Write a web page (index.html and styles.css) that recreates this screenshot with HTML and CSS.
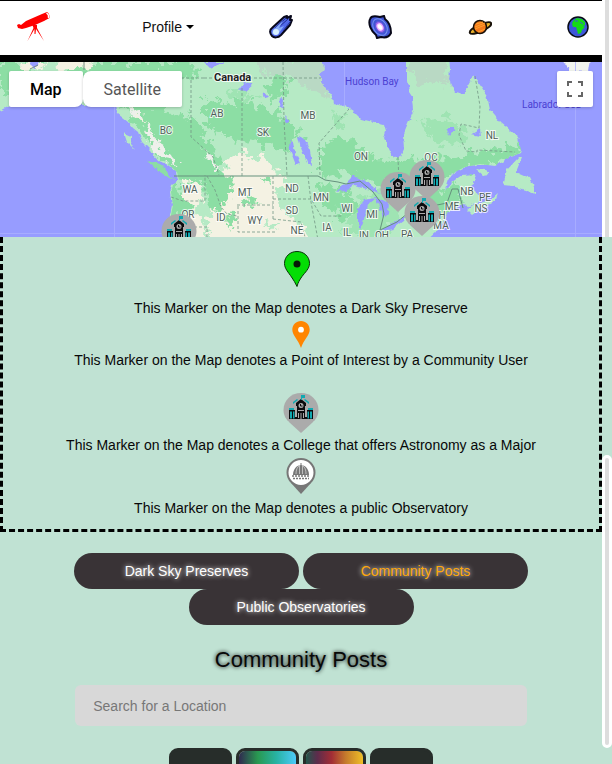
FILE: index.html
```html
<!DOCTYPE html>
<html lang="en">
<head>
<meta charset="utf-8">
<meta name="viewport" content="width=device-width, initial-scale=1">
<title>Community Posts</title>
<link rel="stylesheet" href="styles.css">
</head>
<body>
<svg class="defs" aria-hidden="true">
  <symbol id="college-pin" viewBox="0 0 36 40">
    <path fill="#ababab" d="M18 0C8 0 .5 7.500.5 17c0 6 3 9.500 6 12.500L18 40l11.500-10.500c3-3 6-6.500 6-12.500C35.500 7.500 28 0 18 0z"/>
    <path fill="#0b0b0d" d="M18 6l-5 4v3h1v11h-2v2h12v-2h-2V13h1v-3zM6 17h6v9H6zM24 17h6v9h-6z"/>
    <path fill="#12a9b0" d="M18 2h4v3h-3v2h-1zM7 18.500h2v7H7zm3 0h1.500v7H10zm14.500 0h1.500v7h-1.500zm2.500 0h2v7h-2zM10 9l4-3 1 1-5 4zM26 9l-4-3-1 1 5 4zM6 15h5v2H6zM25 15h5v2h-5z"/>
    <circle cx="18" cy="12.500" r="2.500" fill="#ababab"/>
    <path d="M17.500 11V13h2" fill="none" stroke="#0b0b0d"/>
    <path fill="#ababab" d="M15 17h6v1h-6zM15 20h1v5h-1zm5 0h1v5h-1zM17.500 20h1v6h-1z"/>
  </symbol>
</svg>
<div class="shell">
  <div class="page">
    <header class="navbar">
      <a class="logo" href="#" aria-label="Home">
        <svg width="34" height="30" viewBox="0 0 34 30"><g fill="#f00"><path d="M0 13l2-1 2 1 5-4L25 2l5-2c2 1 3 4 2.500 6L27 9l-9 4-9 3-4 1-4-1z"/><path d="M15 12l5 1v3l7 13-8-12-.5 5h-1V17l-7 12 6-13z"/></g><path d="M29.500 1c1.500 1 2.500 3 2 5" stroke="#fff" fill="none" stroke-width="1.500"/></svg>
      </a>
      <button class="profile" type="button">Profile<span class="caret"></span></button>
      <a href="#" aria-label="Comets">
        <svg width="24" height="24" viewBox="0 0 24 24"><path d="M3 13L15 2l3-1v2l4-2-1 4h2l-2 5-9 10c-3 3-7 3-9 1s-3-6 0-8z" fill="#5068e8" stroke="#08081c" stroke-width="2" stroke-linejoin="round"/><path d="M6 13L17 3M14 16l7-9M10 12l9-8" stroke="#202c90"/><path d="M4 15l10-9-4 7 5-2-5 7c-3 3-6 2-7 0z" fill="#89adfa"/><circle cx="7" cy="17" r="3" fill="#d8efff"/></svg>
      </a>
      <a href="#" aria-label="Galaxies">
        <svg width="24" height="24" viewBox="0 0 24 24"><path d="M2 4c1-3 6-3 10-2l4-1 1 3c4 3 6 9 6 14-2 4-6 5-10 4l-4 1-1-3C3 16 0 9 2 4z" fill="#4054d5" stroke="#070718" stroke-width="2"/><g fill="none" transform="rotate(57 12 12)"><ellipse cx="12" cy="12" rx="9" ry="6.500" stroke="#7896f0"/><ellipse cx="12" cy="12" rx="6" ry="4" fill="#a56af0" stroke="#6058d5"/><ellipse cx="12" cy="12" rx="3.500" ry="2.500" fill="#fff" stroke="#f3b7ff"/></g></svg>
      </a>
      <a href="#" aria-label="Planets">
        <svg width="24" height="24" viewBox="0 0 24 24"><path d="M2 18c-1-2 2-5 9-8s11-4 12-2-2 5-9 8-11 4-12 2z" fill="#e9b02b" stroke="#171008" stroke-width="2"/><circle cx="12" cy="12" r="6.500" fill="#f47a1b" stroke="#171008" stroke-width="1.500"/><path d="M8 9l7-2M7 12l10-4M7 14l10-4M10 17l7-3" stroke="#ffa02e"/></svg>
      </a>
      <a href="#" aria-label="Earth">
        <svg width="22" height="22" viewBox="0 0 22 22"><circle cx="11" cy="11" r="10" fill="#3d57d9" stroke="#080b14" stroke-width="1.500"/><path d="M6 5l4-3 5 1 3 3v3l-2 1 2 1-3 3-1 3-3 1-1-4-1-3H6L5 8z" fill="#15db16"/><path d="M8 5h3M13 6l3 2" stroke="#3d57d9"/></svg>
      </a>
    </header>

    <section class="map" aria-label="Map">
      <svg class="map-canvas" viewBox="0 62 602 175" preserveAspectRatio="xMidYMin slice">
        <defs>
          <filter id="coast" x="-5%" y="-5%" width="110%" height="110%" color-interpolation-filters="sRGB"><feTurbulence type="fractalNoise" baseFrequency=".18" numOctaves="2" seed="4"/><feDisplacementMap in="SourceGraphic" scale="5" xChannelSelector="R" yChannelSelector="G"/></filter>
          <filter id="patch" x="-10%" y="-10%" width="120%" height="120%" color-interpolation-filters="sRGB"><feTurbulence type="fractalNoise" baseFrequency=".12" numOctaves="4" seed="8"/><feDisplacementMap in="SourceGraphic" scale="26" xChannelSelector="R" yChannelSelector="G"/></filter>
          <filter id="plain" x="-10%" y="-10%" width="120%" height="120%" color-interpolation-filters="sRGB"><feTurbulence type="fractalNoise" baseFrequency=".14" numOctaves="3" seed="3"/><feDisplacementMap in="SourceGraphic" scale="16" xChannelSelector="R" yChannelSelector="G"/></filter>
          <clipPath id="land-clip"><path d="M-10 50H448L450 68 449 80 455 92 463 94 470 82 473 75 480 85 487 95 490 110 500 122 510 130 518 137 521 150 520 153 505 160 495 166 480 164 465 167 455 172 448 180 444 192 452 182 462 175 475 174 477 180 470 186 476 192 482 200 470 206 460 205 448 212 443 222 437 230 424 242H170L171 215 173 205 171 192 173 185 179 180 177 172 169 165 158 160 151 150 143 142 139 132 134 128 129 122 119 114 116 105H12L0 110-10 111z"/></clipPath>
        </defs>
        <rect y="62" width="602" height="175" fill="#979cff"/>
        <g fill="#b6eac5" filter="url(#coast)">
          <path d="M-10 50H448L450 68 449 80 455 92 463 94 470 82 473 75 480 85 487 95 490 110 500 122 510 130 518 137 521 150 520 153 505 160 495 166 480 164 465 167 455 172 448 180 444 192 452 182 462 175 475 174 477 180 470 186 476 192 482 200 470 206 460 205 448 212 443 222 437 230 424 242H169L170 215 172 205 170 192 172 185 178 180 176 172 168 165 157 160 150 150 142 142 138 132 133 128 128 122 118 114 115 105H12L0 111-10 112z"/>
          <path d="M467 210L473 205 490 200 498 193 495 201 482 208 472 215zM503 185L507 170 519 157 522 157 516 172 530 178 535 188 535 194 525 190 512 186zM476 169L485 170 490 174 483 175zM124 133L131 136 131 143 135 150 127 142z"/>
          <path d="M148 161L160 164 168 172 174 181 160 172z" fill="#8cdea4"/>
          <path d="M562 58H590L588 72 570 71z" fill="#f2f5ef"/>
        </g>
        <g clip-path="url(#land-clip)">
          <g filter="url(#patch)">
            <path fill="#8cdea4" d="M124 108L140 88 170 112 195 118 212 146 222 168 218 186 190 184 174 176 150 146zM205 100L250 103 288 120 304 138 282 150 252 142 226 136 205 126zM320 145L345 135 362 150 377 160 403 162 430 158 455 157 515 143 522 156 475 168 450 176 426 175 403 190 370 183 345 172 320 180zM0 62H45L30 80 0 96zM60 62H190L200 72 180 80 66 76z"/>
            <path fill="#8cdea4" d="M318 184L350 190 360 212 342 221 323 203zM430 195L455 184 466 190 449 216 432 221zM270 70L290 80 280 100 268 98zM166 184H180L184 244H164z"/>
            <path fill="#b9d9c4" d="M260 58H322L330 98 310 90 290 78 262 74zM408 58H448V74L455 82 430 84 412 80z"/>
            <path fill="#9fe4b3" d="M330 110L350 120 340 130zM228 92L240 88 256 98 240 102zM420 120L450 116 470 140 440 146zM360 200L380 190 400 204 390 236H340L352 220z"/>
          </g>
          <g filter="url(#plain)">
            <path fill="#f4f2e3" d="M226 163L232 158 241 148 252 160 262 155 274 169 286 178 290 196 278 210 292 219 308 230 306 248H206L208 222 214 204 206 196 220 186zM186 182L200 180 203 196 192 208 204 222 206 245H184L188 220 182 200z"/>
            <path fill="#f4f2e3" d="M133 105L142 114 144 123 135 116zM20 62H45L42 69 24 70zM56 60H94L91 68 61 70z"/>
            <path fill="#8cdea4" d="M208 160L219 172 232 178 231 192 224 204 216 212 207 204 206 184zM236 201L254 199 262 203 250 206zM228 212L236 214 234 228 227 226zM258 178L274 182 266 186zM184 203L194 206 196 212 184 212zM176 196L184 196V240H178z"/>
            <path fill="#b6eac5" d="M276 190L296 180 316 194 320 220 310 228 290 214 280 212zM262 222L280 226 270 231z"/>
            <path fill="#eef0eb" d="M146 124L151 127 156 141 166 147 174 157 178 168 170 162 160 156 154 148 148 137zM202 147L210 156 217 170 213 170zM128 106L142 110 142 118 134 114z"/>
          </g>
        </g>
        <g fill="#979cff" filter="url(#coast)">
          <path d="M321 55L324 68 321 75 321 82 326 88 332 96 333 104 345 106 353 111 361 119 373 122 384 125 386 132 384 138 390 151 394 158 400 157 404 148 403 136 408 124 414 110 413 98 409 92 407 82 407 55z"/>
          <path d="M336 193L345 184 353 176 365 180 372 186 380 193 367 189 354 186 345 191zM358 225L358 208 364 200 376 198 367 206 363 222 360 230zM375 198L389 202 388 213 383 218 378 204zM380 231L393 223 406 217 404 221 393 229zM298 136L305 140 310 150 312 166 307 163 301 148zM289 141L293 142 295 153 300 163 296 165 290 150zM280 98L284 100 282 110 279 107zM238 90L244 82 254 84 246 91zM204 62H225L210 68zM30 62H39L34 69zM470 135L480 129 481 137zM446 128L455 128 450 136zM284 115L290 121 286 124zM262 90L268 97 264 98z"/>
        </g>
        <g fill="none" stroke="#739784" stroke-width="1">
          <path d="M174 176H318L325 180 338 182 346 184 360 181 373 192 382 204 384 214 380 230 397 222 408 213 431 210 437 205 447 203 452 189 458 189 463 208" stroke="#65917d"/>
          <g stroke-dasharray="3 2" opacity=".8"><path d="M176 78H204M191 80V137L200 145 213 157 219 175M204 78H321M283 62L284 120 287 175M242 88V176M320 175L319 143 349 109M398 157L399 184M273 176V220M273 199H311L321 216H342M308 176L311 202 318 240M171 197L183 201H205V175M184 227H207V237M273 219L301 222 305 237M237 205H273M238 206V232H275M207 176L215 190 221 207 227 214 237 216M475 76L480 106 479 128 461 124 459 135 466 151 477 152V150L515 152"/></g>
        </g>
        <g stroke="#acb1ff" stroke-width="1" opacity=".8"><path d="M114.500 107V237M344.500 62V107M575.500 62V237M0 233.500H167M440 233.500H602"/></g>
        <path d="M30 69L38 65M84 62V70" stroke="#758b80"/>
        <g class="map-labels">
          <text x="166" y="134">BC</text><text x="217" y="117">AB</text><text x="263" y="136">SK</text><text x="308" y="119">MB</text><text x="361" y="160">ON</text><text x="431" y="161">QC</text><text x="492" y="139">NL</text><text x="190" y="193">WA</text><text x="188" y="218">OR</text><text x="245" y="196">MT</text><text x="292" y="192">ND</text><text x="292" y="214">SD</text><text x="321" y="201">MN</text><text x="347" y="212">WI</text><text x="372" y="218">MI</text><text x="221" y="221">ID</text><text x="255" y="224">WY</text><text x="297" y="234">NE</text><text x="327" y="231">IA</text><text x="347" y="236">IL</text><text x="364" y="239">IN</text><text x="382" y="239">OH</text><text x="407" y="238">PA</text><text x="467" y="195">NB</text><text x="485" y="201">PE</text><text x="481" y="212">NS</text><text x="452" y="210">ME</text><text x="442" y="219">H</text><text x="441" y="229">MA</text>
          <text class="country" x="214" y="81">Canada</text>
        </g>
        <g class="sea"><text x="345" y="85">Hudson Bay</text><text x="522" y="108">Labrador Sea</text></g>
        <use href="#college-pin" x="380" y="172" width="36" height="40"/>
        <use href="#college-pin" x="409" y="160" width="36" height="40"/>
        <use href="#college-pin" x="404" y="196" width="36" height="40"/>
        <use href="#college-pin" x="161" y="214" width="36" height="40"/>
      </svg>
      <div class="map-controls">
        <div class="map-types"><button class="map-type current" type="button">Map</button><button class="map-type" type="button">Satellite</button></div>
        <button class="fullscreen" type="button" aria-label="Toggle fullscreen view"><svg width="18" height="18" viewBox="0 0 18 18"><path d="M2 6V2h4M12 2h4v4M16 12v4h-4M6 16H2v-4" fill="none" stroke="#666" stroke-width="2"/></svg></button>
      </div>
    </section>

    <section class="legend">
      <figure class="entry">
        <svg width="34" height="36" viewBox="0 0 34 36"><path d="M13 .500C6 .500.500 5.500.500 12.500c0 5 4 9 7 13.500 2 3 4 6 5.500 9.500 1-4 2.500-6.500 5-10 3-4 7.500-8 7.500-13C25.500 5.500 20 .500 13 .500z" fill="#04dd05" stroke="#093409"/><circle cx="13" cy="13" r="3.500" fill="#061806"/></svg>
        <figcaption>This Marker on the Map denotes a Dark Sky Preserve</figcaption>
      </figure>
      <figure class="entry">
        <svg width="18" height="27" viewBox="0 0 18 28"><path d="M9 0C4 0 0 4 0 9c0 6 6 10 9 19 3-9 9-13 9-19 0-5-4-9-9-9z" fill="#ff8500"/><circle cx="9" cy="9" r="3" fill="#fff"/></svg>
        <figcaption>This Marker on the Map denotes a Point of Interest by a Community User</figcaption>
      </figure>
      <figure class="entry spaced">
        <svg width="36" height="40"><use href="#college-pin" width="36" height="40"/></svg>
        <figcaption>This Marker on the Map denotes a College that offers Astronomy as a Major</figcaption>
      </figure>
      <figure class="entry">
        <svg width="30" height="36" viewBox="0 0 30 36"><path d="M5 25h20L15 36z" fill="#777"/><circle cx="15" cy="14.500" r="13.500" fill="#fff" stroke="#777" stroke-width="2"/><path d="M7 17c0-6 4-10 8-10s8 4 8 10z" fill="#777"/><path d="M10 16c0-4 1-7 4-9M13.500 16V8M16.500 16V8M20 16c0-4-1-7-4-9" fill="none" stroke="#ddd" stroke-width=".7"/><path d="M6 18h18M7 20.500h16" stroke="#777" stroke-width="1.500" stroke-dasharray="2 1"/><path d="M15 5v2" stroke="#777"/></svg>
        <figcaption>This Marker on the Map denotes a public Observatory</figcaption>
      </figure>
    </section>

    <main class="content">
      <nav class="tabs" aria-label="Lists">
        <button class="tab" type="button">Dark Sky Preserves</button>
        <button class="tab active" type="button">Community Posts</button>
        <button class="tab" type="button">Public Observatories</button>
      </nav>
      <h1>Community Posts</h1>
      <input class="search" type="search" placeholder="Search for a Location" aria-label="Search for a Location">
      <div class="swatches">
        <button class="swatch" type="button" aria-label="Dark"></button>
        <button class="swatch cool" type="button" aria-label="Cool"></button>
        <button class="swatch warm" type="button" aria-label="Warm"></button>
        <button class="swatch" type="button" aria-label="Plain"></button>
      </div>
    </main>
  </div>
  <div class="rail" aria-hidden="true"><div class="rail-top"></div><div class="rail-thumb"></div></div>
</div>
</body>
</html>
```
FILE: styles.css
```css
* { box-sizing: border-box; }
html { scrollbar-width: none; }
body { margin: 0; background: #c0e2d3; color: #080808; font: 14px/22px "Liberation Sans", Arial, sans-serif; }
button, input { font: inherit; }
svg { display: block; }
.defs { position: absolute; width: 0; height: 0; }
.shell { display: grid; grid-template-columns: minmax(0, 1fr) 10px; max-height: 100vh; overflow: hidden; }

.navbar { display: flex; align-items: center; justify-content: space-between; min-height: 62px; padding: 0 13px 2px 17px; background: #fff; border-top: 1px solid #000; border-bottom: 7px solid #000; }
.logo { margin-right: 16px; }
.profile { display: flex; align-items: center; gap: 4px; padding: 0; border: 0; background: none; color: #111; }
.caret { border: 4px solid transparent; border-top-color: #000; border-bottom: 0; }

.map { position: relative; height: 175px; overflow: hidden; background: #979cff; }
.map-canvas { width: 100%; height: 100%; }
.map-labels { font: 10px Roboto, sans-serif; fill: #4f5f59; stroke: #fffc; stroke-width: 2px; paint-order: stroke; text-anchor: middle; }
.map-labels .country { font-size: 11px; font-weight: 700; fill: #222; text-anchor: start; }
.sea { font: 10px Roboto, sans-serif; fill: #4b3fd2; text-anchor: start; }
.map-controls { position: absolute; inset: 9px 9px auto; display: flex; justify-content: space-between; }
.map-types { display: flex; }
.map-type { height: 36px; padding: 0 21px; border: 0; border-radius: 2px 2px 8px 2px; background: #fff; color: #565656; font: 16px Roboto, sans-serif; box-shadow: 0 1px 3px #0003; }
.map-type + .map-type { border-radius: 8px 2px 2px 8px; }
.map-type.current { color: #000; font-weight: 500; }
.fullscreen { display: grid; place-items: center; width: 36px; height: 36px; padding: 0; border: 0; border-radius: 2px; background: #fff; box-shadow: 0 1px 3px #0003; }

.legend { padding: 14px 0 8px; border: 3px dashed #000; border-top: 0; text-align: center; }
.entry { display: flex; flex-direction: column; align-items: center; gap: 1px; margin: 0 0 2px; }
.entry:first-child { gap: 10px; }
.entry:last-child { gap: 3px; }
.spaced { margin-top: 22px; }

.content { display: flex; flex-direction: column; align-items: center; padding-top: 21px; }
.tabs { display: flex; flex-wrap: wrap; justify-content: center; column-gap: 4px; }
.tab { width: 225px; height: 36px; padding: 0; border: 0; border-radius: 18px; background: #393336; color: #fff; text-shadow: 0 0 5px #fff; }
.tab.active { color: #ffa90a; }
h1 { margin: 20px 0 10px; font-size: 22px; line-height: 30px; font-weight: 400; text-shadow: 0 0 4px #000; }
.search { width: 75%; height: 41px; padding: 0 18px; border: 0; border-radius: 6px; background: #d8d8d8; appearance: none; }
.search::placeholder { color: #777; opacity: 1; }
.swatches { display: flex; gap: 4px; margin-top: 22px; }
.swatch { width: 63px; height: 48px; padding: 0; border: 3px solid #272d2a; border-radius: 9px; background: #272d2a; }
.cool { background: linear-gradient(90deg, #30294f, #299951 33%, #28b3a4 66%, #4ccafa) padding-box; }
.warm { background: linear-gradient(90deg, #23564b, #5d2c4c 20%, #a22d35 45%, #c57b2c 70%, #efbf26) padding-box; }

.rail { display: flex; flex-direction: column; gap: 218px; }
.rail-top, .rail-thumb { border: solid #fff; border-width: 0 3px; background: #ddd; height: 237px; flex: none; }
.rail-thumb { height: 293px; border-width: 3px; border-radius: 5px; }
```
